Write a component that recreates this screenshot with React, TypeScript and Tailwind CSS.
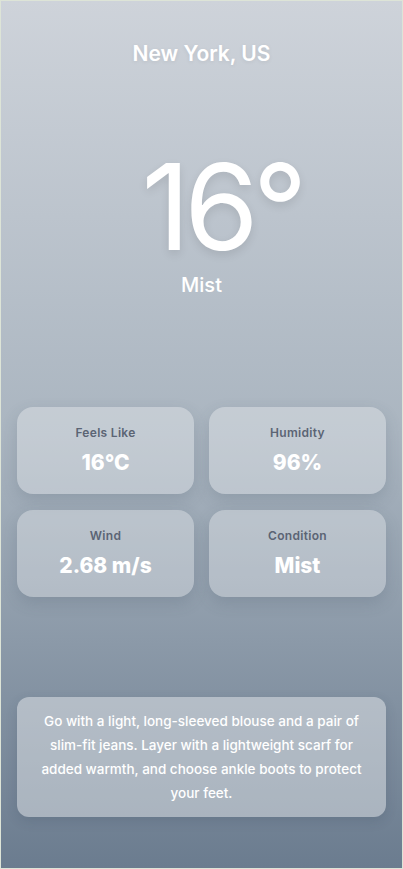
const stats = [
  { label: "Feels Like", value: "16°C" },
  { label: "Humidity", value: "96%" },
  { label: "Wind", value: "2.68 m/s" },
  { label: "Condition", value: "Mist" },
];

function StatCard({ label, value }: { label: string; value: string }) {
  return (
    <div className="flex flex-col items-center rounded-2xl bg-white/30 pt-[18px] pb-[17px] shadow-[0_6px_16px_rgba(60,75,95,0.18)]">
      <p className="text-xs font-semibold leading-4 tracking-wide text-[#5b6474]">{label}</p>
      <p className="mt-2 text-[21px] font-extrabold leading-7 text-white">{value}</p>
    </div>
  );
}

export default function App() {
  return (
    <div
      className="flex h-[869px] w-full flex-col border border-[#dde4d7] bg-gradient-to-b from-[#ced3da] via-[#aab5c0] to-[#6b7c8f] px-4 text-white"
      style={{ fontFamily: "Inter, 'Noto Sans', sans-serif" }}
    >
      <h1 className="mt-[39px] text-center text-[21px] font-semibold leading-7 [text-shadow:0_1px_4px_rgba(0,0,0,0.08)]">
        New York, US
      </h1>

      <div className="mt-[79px] pl-10 text-center text-[120px] font-normal leading-none tracking-tighter [text-shadow:0_4px_10px_rgba(0,0,0,0.1)]">
        16°
      </div>
      <p className="mt-1 text-center text-xl font-medium leading-7">Mist</p>

      <div className="mt-[108px] grid grid-cols-2 gap-x-[15px] gap-y-4">
        {stats.map((s) => (
          <StatCard key={s.label} label={s.label} value={s.value} />
        ))}
      </div>

      <div className="mt-[100px] rounded-xl bg-white/40 px-5 py-3 text-center text-[13.5px] font-medium leading-6 shadow-[0_4px_12px_rgba(40,55,75,0.15)]">
        Go with a light, long-sleeved blouse and a pair of slim-fit jeans. Layer with a lightweight scarf for added
        warmth, and choose ankle boots to protect your feet.
      </div>
    </div>
  );
}
